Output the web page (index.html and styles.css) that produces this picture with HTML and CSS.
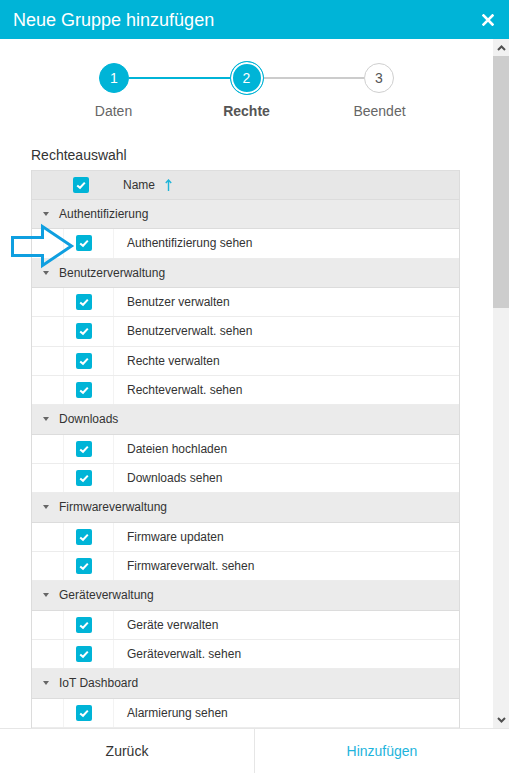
FILE: index.html
```html
<!DOCTYPE html>
<html lang="de">
<head>
<meta charset="utf-8">
<title>Neue Gruppe hinzufügen</title>
<link rel="stylesheet" href="styles.css">
</head>
<body>
<div class="dialog">
  <header class="titlebar">
    <h1 class="title">Neue Gruppe hinzufügen</h1>
    <button class="close" aria-label="Schließen">
      <svg width="12" height="12" viewBox="0 0 12 12"><path d="M1.5 1.5 L10.5 10.5 M10.5 1.5 L1.5 10.5" stroke="#fff" stroke-width="2.6" stroke-linecap="square" fill="none"/></svg>
    </button>
  </header>

  <div class="body">
    <div class="content">
      <div class="stepper">
        <div class="track">
          <span class="dot done">1</span>
          <span class="line done"></span>
          <span class="dot active">2</span>
          <span class="line"></span>
          <span class="dot">3</span>
        </div>
        <div class="labels">
          <span>Daten</span>
          <span class="current">Rechte</span>
          <span>Beendet</span>
        </div>
      </div>

      <div class="section">
        <div class="section-title">Rechteauswahl</div>
        <div class="table">
          <div class="thead">
            <span class="cb"><svg viewBox="0 0 16 16"><path d="M4.2 8.4 L7 10.8 L11.8 5.6" /></svg></span>
            <span class="th-name">Name</span>
            <svg class="sort" width="7" height="12" viewBox="0 0 7 12"><path d="M3.5 1 V12 M0.8 4 L3.5 1 L6.2 4" fill="none" stroke="#1eb4d8" stroke-width="1.4"/></svg>
          </div>

          <div class="group"><span class="caret"></span>Authentifizierung</div>
          <div class="item"><span class="indent"></span><span class="cbcell"><span class="cb"><svg viewBox="0 0 16 16"><path d="M4.2 8.4 L7 10.8 L11.8 5.6" /></svg></span></span><span class="label">Authentifizierung sehen</span></div>

          <div class="group"><span class="caret"></span>Benutzerverwaltung</div>
          <div class="item"><span class="indent"></span><span class="cbcell"><span class="cb"><svg viewBox="0 0 16 16"><path d="M4.2 8.4 L7 10.8 L11.8 5.6" /></svg></span></span><span class="label">Benutzer verwalten</span></div>
          <div class="item"><span class="indent"></span><span class="cbcell"><span class="cb"><svg viewBox="0 0 16 16"><path d="M4.2 8.4 L7 10.8 L11.8 5.6" /></svg></span></span><span class="label">Benutzerverwalt. sehen</span></div>
          <div class="item"><span class="indent"></span><span class="cbcell"><span class="cb"><svg viewBox="0 0 16 16"><path d="M4.2 8.4 L7 10.8 L11.8 5.6" /></svg></span></span><span class="label">Rechte verwalten</span></div>
          <div class="item"><span class="indent"></span><span class="cbcell"><span class="cb"><svg viewBox="0 0 16 16"><path d="M4.2 8.4 L7 10.8 L11.8 5.6" /></svg></span></span><span class="label">Rechteverwalt. sehen</span></div>

          <div class="group"><span class="caret"></span>Downloads</div>
          <div class="item"><span class="indent"></span><span class="cbcell"><span class="cb"><svg viewBox="0 0 16 16"><path d="M4.2 8.4 L7 10.8 L11.8 5.6" /></svg></span></span><span class="label">Dateien hochladen</span></div>
          <div class="item"><span class="indent"></span><span class="cbcell"><span class="cb"><svg viewBox="0 0 16 16"><path d="M4.2 8.4 L7 10.8 L11.8 5.6" /></svg></span></span><span class="label">Downloads sehen</span></div>

          <div class="group"><span class="caret"></span>Firmwareverwaltung</div>
          <div class="item"><span class="indent"></span><span class="cbcell"><span class="cb"><svg viewBox="0 0 16 16"><path d="M4.2 8.4 L7 10.8 L11.8 5.6" /></svg></span></span><span class="label">Firmware updaten</span></div>
          <div class="item"><span class="indent"></span><span class="cbcell"><span class="cb"><svg viewBox="0 0 16 16"><path d="M4.2 8.4 L7 10.8 L11.8 5.6" /></svg></span></span><span class="label">Firmwareverwalt. sehen</span></div>

          <div class="group"><span class="caret"></span>Geräteverwaltung</div>
          <div class="item"><span class="indent"></span><span class="cbcell"><span class="cb"><svg viewBox="0 0 16 16"><path d="M4.2 8.4 L7 10.8 L11.8 5.6" /></svg></span></span><span class="label">Geräte verwalten</span></div>
          <div class="item"><span class="indent"></span><span class="cbcell"><span class="cb"><svg viewBox="0 0 16 16"><path d="M4.2 8.4 L7 10.8 L11.8 5.6" /></svg></span></span><span class="label">Geräteverwalt. sehen</span></div>

          <div class="group"><span class="caret"></span>IoT Dashboard</div>
          <div class="item"><span class="indent"></span><span class="cbcell"><span class="cb"><svg viewBox="0 0 16 16"><path d="M4.2 8.4 L7 10.8 L11.8 5.6" /></svg></span></span><span class="label">Alarmierung sehen</span></div>
        </div>
      </div>

      <svg class="pointer" width="70" height="52" viewBox="0 0 70 52">
        <path d="M4.5 17.5 H34.5 V6.5 L63.5 26 L34.5 45.5 V35.5 H4.5 Z" fill="none" stroke="#0f9fe0" stroke-width="3" stroke-linejoin="miter"/>
      </svg>
    </div>

    <div class="scrollbar">
      <div class="sb-btn">
        <svg width="9" height="6" viewBox="0 0 9 6"><path d="M1 5 L4.5 1.5 L8 5" fill="none" stroke="#505050" stroke-width="2"/></svg>
      </div>
      <div class="sb-track"><div class="sb-thumb"></div></div>
      <div class="sb-btn">
        <svg width="9" height="6" viewBox="0 0 9 6"><path d="M1 1 L4.5 4.5 L8 1" fill="none" stroke="#505050" stroke-width="2"/></svg>
      </div>
    </div>
  </div>

  <footer class="actions">
    <button class="action">Zurück</button>
    <button class="action primary">Hinzufügen</button>
  </footer>
</div>
</body>
</html>
```

FILE: styles.css
```css
* { box-sizing: border-box; }

html, body {
  margin: 0;
  padding: 0;
  width: 509px;
  height: 773px;
  overflow: hidden;
  background: #fff;
  font-family: "Liberation Sans", Arial, sans-serif;
  color: #333;
}

.dialog {
  width: 509px;
  height: 773px;
  display: flex;
  flex-direction: column;
}

.titlebar {
  height: 39px;
  flex: none;
  background: #00b4d7;
  display: flex;
  align-items: center;
  justify-content: space-between;
  padding: 0 15px 0 13px;
}

.title {
  margin: 0;
  font-size: 18px;
  font-weight: normal;
  color: #fff;
  line-height: 20px;
}

.close {
  border: 0;
  background: none;
  padding: 0;
  width: 12px;
  height: 12px;
  display: flex;
}

.body {
  flex: 1;
  display: flex;
  min-height: 0;
}

.content {
  flex: 1;
  position: relative;
  overflow: hidden;
  padding-top: 24px;
}

/* stepper */
.stepper {
  display: flex;
  flex-direction: column;
  align-items: center;
}

.track {
  width: 295px;
  height: 34px;
  margin-top: -2px;
  display: flex;
  align-items: center;
}

.dot {
  width: 30px;
  height: 30px;
  border-radius: 50%;
  flex: none;
  display: flex;
  align-items: center;
  justify-content: center;
  font-size: 14px;
  color: #555;
  background: #fff;
  border: 1px solid #cfcfcf;
}

.dot.done {
  background: #00b4d7;
  border-color: #00b4d7;
  color: #fff;
}

.dot.active {
  width: 34px;
  height: 34px;
  background: #00b4d7;
  border: 1.5px solid #00b4d7;
  box-shadow: inset 0 0 0 2px #fff;
  color: #fff;
}

.line {
  flex: 1;
  height: 2px;
  background: #cccccc;
}

.line.done { background: #00b4d7; }

.labels {
  margin-top: 8px;
  display: grid;
  grid-template-columns: repeat(3, 133px);
  font-size: 14px;
  line-height: 16px;
  color: #666;
  text-align: center;
}

.labels .current {
  font-weight: bold;
  color: #555;
}

/* section */
.section {
  margin: 28px 33px 0 31px;
}

.section-title {
  font-size: 14px;
  line-height: 16px;
  color: #333;
  margin-bottom: 7px;
}

.table {
  border-left: 1px solid #dcdcdc;
  border-right: 1px solid #dcdcdc;
  font-size: 12px;
}

.thead {
  height: 30px;
  background: #e7e7e7;
  border-top: 1px solid #dedede;
  border-bottom: 1px solid #dcdcdc;
  display: flex;
  align-items: center;
  padding-left: 41px;
}

.th-name {
  margin-left: 34px;
  color: #333;
}

.sort {
  margin-left: 10px;
}

.cb {
  width: 16px;
  height: 16px;
  border-radius: 2px;
  background: #00b4d7;
  display: inline-flex;
  flex: none;
}

.cb svg {
  width: 16px;
  height: 16px;
}

.cb path {
  fill: none;
  stroke: #fff;
  stroke-width: 2;
}

.group {
  height: 29.333px;
  background: #ebebeb;
  border-bottom: 1px solid #dcdcdc;
  display: flex;
  align-items: center;
  padding-left: 11px;
  color: #333;
}

.caret {
  width: 0;
  height: 0;
  border-left: 3.5px solid transparent;
  border-right: 3.5px solid transparent;
  border-top: 4px solid #666;
  margin-right: 10px;
}

.item {
  height: 29.333px;
  display: flex;
  background: #fff;
  border-bottom: 1px solid #ececec;
}

.indent {
  width: 32px;
  flex: none;
  border-right: 1px solid #f3f3f3;
}

.cbcell {
  width: 50px;
  flex: none;
  display: flex;
  align-items: center;
  padding-left: 12px;
  border-right: 1px solid #f3f3f3;
}

.label {
  display: flex;
  align-items: center;
  padding-left: 13px;
  color: #333;
}

.pointer {
  position: absolute;
  left: 8px;
  top: 181px;
}

/* scrollbar */
.scrollbar {
  width: 16px;
  flex: none;
  background: #f1f1f1;
  display: flex;
  flex-direction: column;
}

.sb-btn {
  height: 17px;
  flex: none;
  display: flex;
  align-items: center;
  justify-content: center;
}

.sb-track {
  flex: 1;
}

.sb-thumb {
  height: 252px;
  background: #cdcdcd;
}

/* footer */
.actions {
  height: 45px;
  flex: none;
  display: flex;
  border-top: 1px solid #e6e6e6;
}

.action {
  flex: 1;
  border: 0;
  background: #fff;
  font-family: "Liberation Sans", Arial, sans-serif;
  font-size: 14px;
  color: #333;
  padding: 0;
}

.action + .action {
  border-left: 1px solid #e6e6e6;
}

.action.primary {
  color: #1eb4dc;
}
```
